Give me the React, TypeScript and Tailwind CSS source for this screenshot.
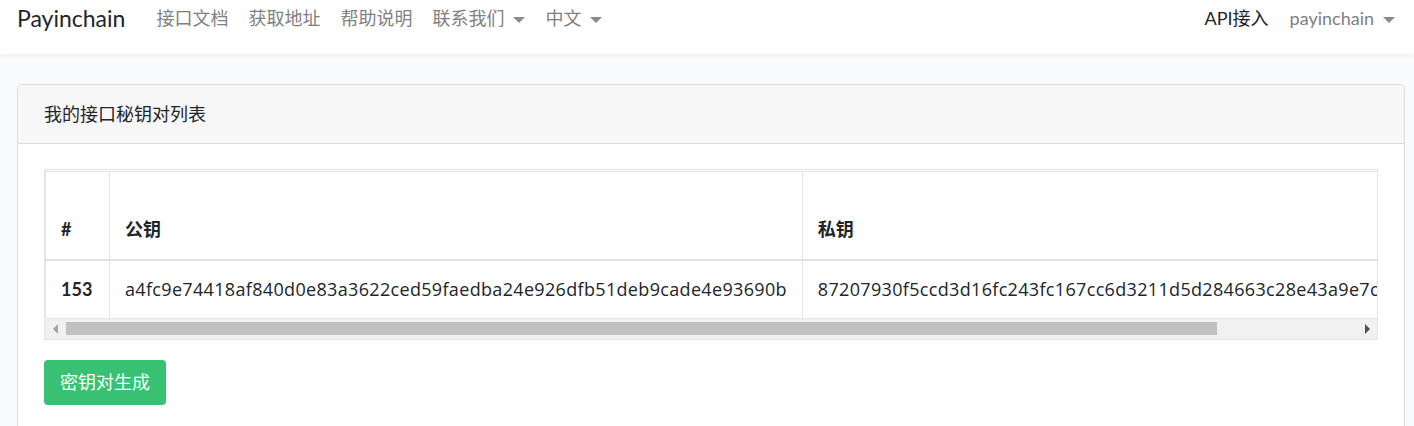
import React from 'react'

const Caret = () => (
    <span className="ml-[9px] inline-block w-0 h-0 border-l-[6px] border-r-[6px] border-t-[6px] border-l-transparent border-r-transparent border-t-[#8a8a8a] align-middle"></span>
)

const keys = [
    {
        id: 153,
        pub: 'a4fc9e74418af840d0e83a3622ced59faedba24e926dfb51deb9cade4e93690b',
        priv: '87207930f5ccd3d16fc243fc167cc6d3211d5d284663c28e43a9e7c0b1d4f2a6',
    },
]

const App: React.FC = () => {
    return (
        <div className="min-h-[426px] bg-[#f8fafc] font-['Lato','Noto_Sans_CJK_SC',sans-serif] text-[18px] text-[#212529]">

            {/* NAVBAR */}
            <nav className="h-[54px] bg-white shadow-[0_2px_4px_rgba(0,0,0,0.04)] flex items-start pt-[4px] pl-[17px] pr-[19px]">
                <span className="text-[23px] leading-[28px] text-[#212529] mr-[31px]">Payinchain</span>
                <div className="flex items-center gap-[20px] text-[#808080] leading-[28px]">
                    <span>接口文档</span>
                    <span>获取地址</span>
                    <span>帮助说明</span>
                    <span>联系我们<Caret /></span>
                    <span>中文<Caret /></span>
                </div>
                <div className="ml-auto flex items-center gap-[21px] leading-[28px]">
                    <span className="text-[#212529]">API接入</span>
                    <span className="text-[#808080]">payinchain<Caret /></span>
                </div>
            </nav>

            {/* CARD */}
            <div className="pt-[30px] pl-[17px] pr-[9px]">
                <div className="bg-white border border-[#dcdcdc] rounded-[5px] overflow-hidden">
                    <div className="h-[59px] bg-[#f7f7f7] border-b border-[#dcdcdc] px-[26px] flex items-center">
                        我的接口秘钥对列表
                    </div>
                    <div className="px-[26px] pt-[25px] pb-[30px]">

                        {/* TABLE WRAPPER */}
                        <div className="border border-[#e2e4e8]">
                            <div className="overflow-hidden pt-[1px]">
                                <table className="w-max border-collapse whitespace-nowrap border-l border-t border-[#e2e4e8]">
                                    <thead>
                                        <tr className="h-[88px] border-b-2 border-[#dee2e6]">
                                            <th className="w-[64px] text-left align-bottom px-[15px] pb-[16px] font-bold border-r border-[#e2e4e8]">#</th>
                                            <th className="w-[692px] text-left align-bottom px-[15px] pb-[16px] font-bold border-r border-[#e2e4e8]">公钥</th>
                                            <th className="text-left align-bottom px-[15px] pb-[16px] font-bold">私钥</th>
                                        </tr>
                                    </thead>
                                    <tbody>
                                        {keys.map((k) => (
                                            <tr key={k.id} className="h-[58px]">
                                                <td className="px-[15px] font-bold border-r border-[#e2e4e8]">{k.id}</td>
                                                <td className="px-[15px] border-r border-[#e2e4e8] font-['Open_Sans',sans-serif] text-[18px] tracking-[0.33px]">{k.pub}</td>
                                                <td className="px-[15px] font-['Open_Sans',sans-serif] text-[18px] tracking-[0.33px]">{k.priv}</td>
                                            </tr>
                                        ))}
                                    </tbody>
                                </table>
                            </div>

                            {/* SCROLLBAR */}
                            <div className="h-[21px] bg-[#f1f1f1] border-t border-[#e2e4e8] flex items-center">
                                <div className="w-[21px] flex justify-center">
                                    <span className="w-0 h-0 border-t-[5px] border-b-[5px] border-r-[5px] border-t-transparent border-b-transparent border-r-[#a3a3a3]"></span>
                                </div>
                                <div className="w-[1151px] h-[13px] bg-[#c1c1c1]"></div>
                                <div className="flex-1 flex justify-end pr-[7px]">
                                    <span className="w-0 h-0 border-t-[5px] border-b-[5px] border-l-[5px] border-t-transparent border-b-transparent border-l-[#505050]"></span>
                                </div>
                            </div>
                        </div>

                        <button className="mt-[20px] h-[45px] px-[16px] rounded-[4px] bg-[#38c172] text-white text-[18px]">
                            密钥对生成
                        </button>
                    </div>
                </div>
            </div>
        </div>
    )
}

export default App
